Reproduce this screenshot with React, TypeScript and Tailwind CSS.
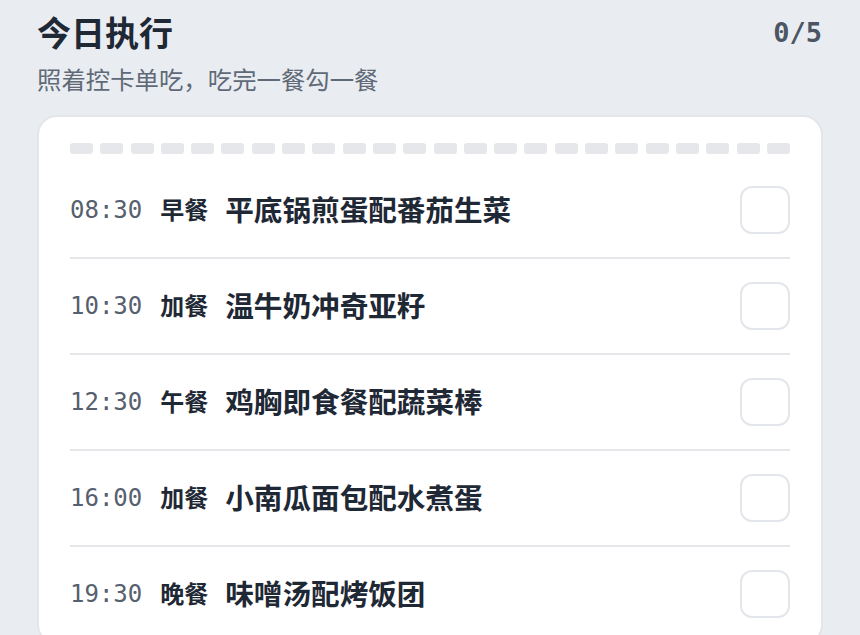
import React from "react";

// meals for today
const meals = [
  { time: "08:30", label: "早餐", food: "平底锅煎蛋配番茄生菜" },
  { time: "10:30", label: "加餐", food: "温牛奶冲奇亚籽" },
  { time: "12:30", label: "午餐", food: "鸡胸即食餐配蔬菜棒" },
  { time: "16:00", label: "加餐", food: "小南瓜面包配水煮蛋" },
  { time: "19:30", label: "晚餐", food: "味噌汤配烤饭团" },
];

const cjk = "font-['Noto_Sans','Noto_Sans_CJK_SC',sans-serif]";
const mono = "font-['DejaVu_Sans_Mono','Noto_Sans_CJK_SC',monospace]";

export default function App() {
  return (
    <div className={`min-h-[635px] h-[635px] overflow-hidden bg-[#e9edf1] px-[37px] pt-[12px] ${cjk}`}>
      <div className="flex items-center justify-between">
        <h1 className="text-[34px] leading-[42px] font-bold text-[#1f2835]">今日执行</h1>
        <span className={`${mono} text-[27px] font-bold text-[#4b5563] mr-[1px]`}>0/5</span>
      </div>
      <p className="mt-[10px] text-[24.4px] leading-[32px] text-[#5f6977]">照着控卡单吃，吃完一餐勾一餐</p>

      <div className="mt-[19px] rounded-[20px] border-2 border-[#e2e5e9] bg-white px-[31px] pt-[26px]">
        <div className="flex justify-between">
          {Array.from({ length: 24 }).map((_, i) => (
            <span key={i} className="h-[11px] w-[23px] rounded-[3px] bg-[#e5e7eb]" />
          ))}
        </div>
        <div className="mt-[9px]">
          {meals.map((m) => (
            <div
              key={m.time}
              className="flex items-center border-b-2 border-[#e5e7eb] py-[23px]"
            >
              <span className={`${mono} text-[24px] leading-[48px] text-[#56606e]`}>{m.time}</span>
              <span className="ml-[18px] text-[24px] leading-[34px] font-bold text-[#1f2835]">{m.label}</span>
              <span className="ml-[17px] text-[28.6px] leading-[40px] font-semibold text-[#1f2835]">{m.food}</span>
              <span className="ml-auto h-[48px] w-[50px] rounded-[12px] border-2 border-[#e3e6ea] bg-white" />
            </div>
          ))}
        </div>
      </div>
    </div>
  );
}
